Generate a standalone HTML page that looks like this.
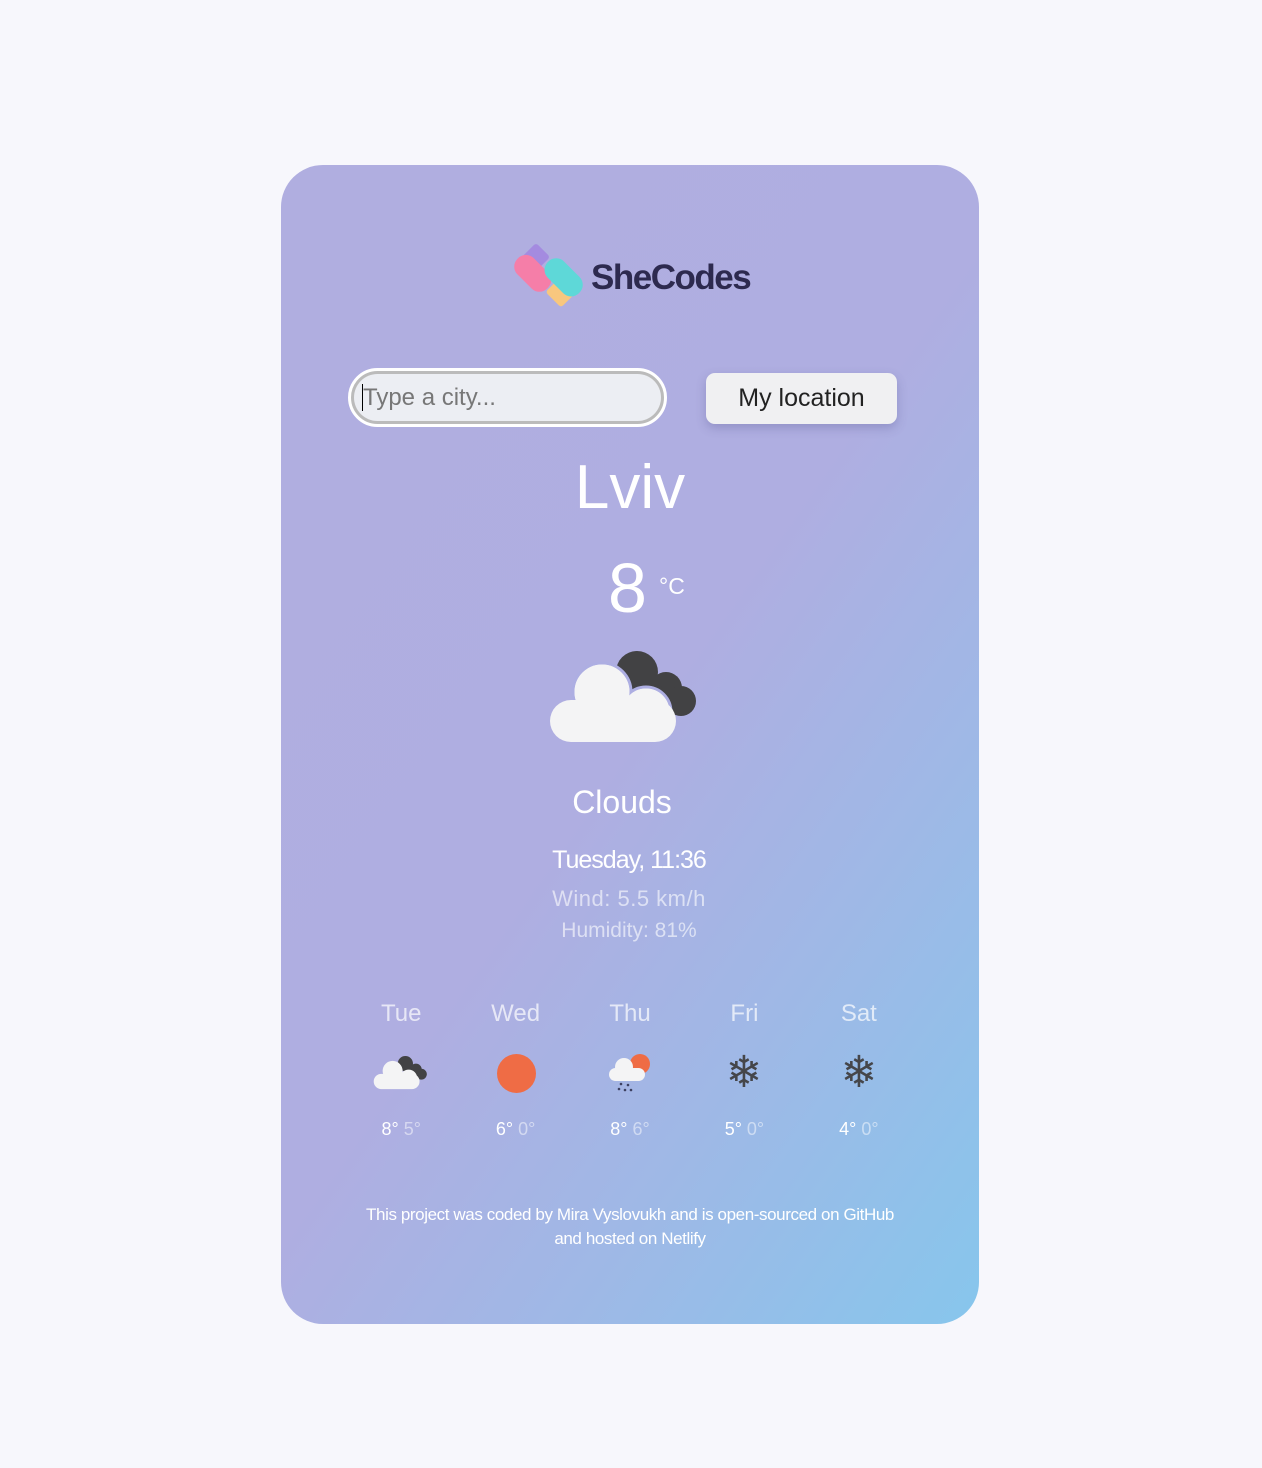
<!DOCTYPE html>
<html><head><meta charset="utf-8"><style>
body{margin:0;width:1262px;height:1468px;background:#f7f7fc;font-family:"Liberation Sans",sans-serif;position:relative;overflow:hidden}
.card{position:absolute;left:281px;top:165px;width:698px;height:1159px;border-radius:42px;background:linear-gradient(125deg,#b0aee0 0%,#afaee1 50%,#9fb8e6 72%,#87c6ec 100%)}
.abs{position:absolute}
.c{text-align:center;color:#fff}
</style></head><body>
<div class="card"></div>
<svg class="abs" style="left:512px;top:243px" width="76" height="70" viewBox="0 0 76 70">
<rect x="14" y="4" width="20" height="20" rx="3" transform="rotate(45 24 14)" fill="#a48be0"/>
<rect x="0" y="19" width="42" height="23" rx="11" transform="rotate(45 21 30)" fill="#f57ea8"/>
<rect x="38" y="38" width="22" height="22" rx="3" transform="rotate(45 49 49)" fill="#f8c77e"/>
<rect x="30" y="23" width="44" height="23" rx="11" transform="rotate(45 52 34)" fill="#5ed8d8"/>
</svg>
<div class="abs" style="left:591px;top:258px;font-size:35px;font-weight:bold;color:#2d2a4f;letter-spacing:-1.5px">SheCodes</div>
<div class="abs" style="left:348px;top:368px;width:319px;height:59px;border-radius:30px;border:3px solid #fff;box-sizing:border-box;background:#bbb;padding:3px">
<div style="width:100%;height:100%;border-radius:26px;background:#eceef3;box-sizing:border-box;padding-left:8px;font-size:24px;color:#777;line-height:47px"><span style="border-left:1.5px solid #000"></span>Type a city...</div></div>
<div class="abs" style="left:706px;top:373px;width:191px;height:51px;border-radius:9px;background:#f0f0f2;box-shadow:0 4px 10px rgba(80,80,140,.3);font-size:25px;line-height:51px;text-align:center;color:#222">My location</div>
<div class="abs c" style="left:281px;width:698px;top:452px;font-size:62px;font-weight:300">Lviv</div>
<div class="abs c" style="left:608px;top:548px;font-size:70px;font-weight:300">8</div>
<div class="abs" style="left:659px;top:573px;font-size:23px;color:#fff">°C</div>
<svg class="abs" style="left:540px;top:640px" width="170" height="110" viewBox="0 0 170 110">
<g fill="#424244"><circle cx="97" cy="32" r="21"/><circle cx="126" cy="48" r="16"/><circle cx="141" cy="61" r="15"/><circle cx="118" cy="62" r="16"/></g>
<g fill="#f4f4f5" stroke="#adaee2" stroke-width="3"><circle cx="62" cy="52" r="29"/><circle cx="106" cy="72" r="25"/></g>
<rect x="10" y="60" width="126" height="42" rx="21" fill="#f4f4f5"/><circle cx="62" cy="52" r="27.5" fill="#f4f4f5"/><circle cx="106" cy="72" r="23.5" fill="#f4f4f5"/>
</svg>
<div class="abs c" style="left:281px;width:682px;top:784px;font-size:32px">Clouds</div>
<div class="abs c" style="left:281px;width:696px;top:846px;font-size:25px;letter-spacing:-1px">Tuesday, 11:36</div>
<div class="abs c" style="left:281px;width:696px;top:886px;font-size:22px;letter-spacing:0.5px;color:rgba(255,255,255,.6)">Wind: 5.5 km/h</div>
<div class="abs c" style="left:281px;width:696px;top:919px;font-size:21px;color:rgba(255,255,255,.6)">Humidity: 81%</div>
<div class="abs" style="left:344px;top:1000px;width:572px;display:flex;color:rgba(255,255,255,.7);font-size:24px">
<div style="flex:1;text-align:center">Tue</div><div style="flex:1;text-align:center">Wed</div><div style="flex:1;text-align:center">Thu</div><div style="flex:1;text-align:center">Fri</div><div style="flex:1;text-align:center">Sat</div></div>
<svg class="abs" style="left:370px;top:1052px" width="62" height="40" viewBox="0 0 170 110">
<g fill="#424244"><circle cx="97" cy="32" r="21"/><circle cx="126" cy="48" r="16"/><circle cx="141" cy="61" r="15"/><circle cx="118" cy="62" r="16"/></g>
<rect x="10" y="60" width="126" height="42" rx="21" fill="#f4f4f5"/><circle cx="62" cy="52" r="27.5" fill="#f4f4f5"/><circle cx="106" cy="72" r="23.5" fill="#f4f4f5"/></svg>
<div class="abs" style="left:497px;top:1054px;width:39px;height:39px;border-radius:50%;background:#ef6c45"></div>
<svg class="abs" style="left:606px;top:1052px" width="48" height="42" viewBox="0 0 48 42">
<circle cx="34" cy="12" r="10" fill="#ef6c45"/>
<circle cx="18" cy="15" r="9" fill="#f4f4f5"/><rect x="3" y="16" width="36" height="13" rx="6.5" fill="#f4f4f5"/>
<g fill="#3d4060"><circle cx="15" cy="32" r="1.3"/><circle cx="22" cy="33" r="1.3"/><circle cx="13" cy="37" r="1.3"/><circle cx="19" cy="38" r="1.3"/><circle cx="25" cy="38" r="1.3"/></g></svg>
<div class="abs" style="left:719px;top:1047px;width:50px;text-align:center;font-size:44px;font-weight:bold;color:#45464a;font-family:'DejaVu Sans'">❄</div>
<div class="abs" style="left:834px;top:1047px;width:50px;text-align:center;font-size:44px;font-weight:bold;color:#45464a;font-family:'DejaVu Sans'">❄</div>
<div class="abs" style="left:344px;top:1119px;width:572px;display:flex;font-size:18px;color:#fff">
<div style="flex:1;text-align:center">8° <span style="opacity:.5">5°</span></div><div style="flex:1;text-align:center">6° <span style="opacity:.5">0°</span></div><div style="flex:1;text-align:center">8° <span style="opacity:.5">6°</span></div><div style="flex:1;text-align:center">5° <span style="opacity:.5">0°</span></div><div style="flex:1;text-align:center">4° <span style="opacity:.5">0°</span></div></div>
<div class="abs c" style="left:281px;width:698px;top:1203px;font-size:17px;line-height:24px;letter-spacing:-0.4px">This project was coded by Mira Vyslovukh and is open-sourced on GitHub<br>and hosted on Netlify</div>
</body></html>
